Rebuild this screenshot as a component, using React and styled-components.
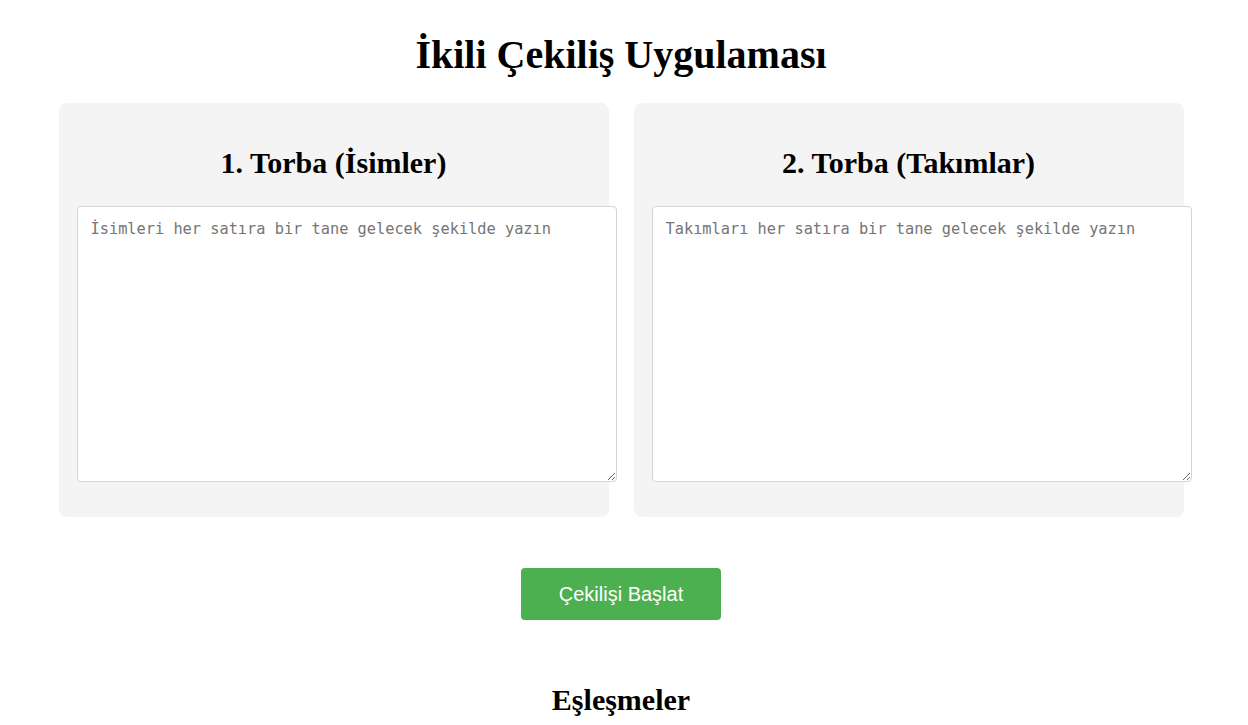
import React, { useState } from "react";
import styled, { createGlobalStyle } from "styled-components";

const GlobalStyle = createGlobalStyle`
  html, body {
    margin: 0;
    padding: 0;
    background: #ffffff;
  }
  body {
    font-family: "Liberation Serif", "Times New Roman", serif;
    color: #000;
  }
`;

const Page = styled.div`
  width: 1242px;
  display: flex;
  flex-direction: column;
  align-items: center;
`;

const Title = styled.h1`
  font-family: "Liberation Serif", serif;
  font-size: 40px;
  line-height: 46px;
  font-weight: bold;
  margin: 32px 0 25px;
`;

const Bags = styled.div`
  display: flex;
  gap: 25px;
  justify-content: center;
`;

const Bag = styled.section`
  box-sizing: border-box;
  width: 550px;
  background: #f4f4f4;
  border-radius: 8px;
  padding: 20px 18px 35px;
`;

const BagTitle = styled.h2`
  font-family: "Liberation Serif", serif;
  font-size: 30px;
  line-height: 34px;
  font-weight: bold;
  text-align: center;
  margin: 23px 0 26px;
`;

const Entry = styled.textarea`
  display: block;
  width: 100%;
  height: 250px;
  padding: 14px 11px 10px 13px;
  border: 1px solid #d4d4d4;
  border-radius: 4px;
  background: #fff;
  font-family: "DejaVu Sans Mono", monospace;
  font-size: 15.3px;
  line-height: 1.15;
  color: #222;
  resize: vertical;
  &::placeholder {
    color: #757575;
  }
  &:focus {
    outline: none;
  }
`;

const StartButton = styled.button`
  margin-top: 51px;
  width: 200px;
  height: 52px;
  border: none;
  border-radius: 4px;
  background: #4caf50;
  color: #fff;
  font-family: "Liberation Sans", Arial, sans-serif;
  font-size: 20px;
  cursor: pointer;
`;

const ResultTitle = styled.h2`
  font-family: "Liberation Serif", serif;
  font-size: 30px;
  font-weight: bold;
  margin: 63px 0 20px;
`;

export default function App() {
  const [names, setNames] = useState("");
  const [teams, setTeams] = useState("");

  return (
    <>
      <GlobalStyle />
      <Page>
        <Title>İkili Çekiliş Uygulaması</Title>
        <Bags>
          <Bag>
            <BagTitle>1. Torba (İsimler)</BagTitle>
            <Entry
              value={names}
              onChange={(e) => setNames(e.target.value)}
              placeholder="İsimleri her satıra bir tane gelecek şekilde yazın"
            />
          </Bag>
          <Bag>
            <BagTitle>2. Torba (Takımlar)</BagTitle>
            <Entry
              value={teams}
              onChange={(e) => setTeams(e.target.value)}
              placeholder="Takımları her satıra bir tane gelecek şekilde yazın"
            />
          </Bag>
        </Bags>
        <StartButton>Çekilişi Başlat</StartButton>
        <ResultTitle>Eşleşmeler</ResultTitle>
      </Page>
    </>
  );
}
